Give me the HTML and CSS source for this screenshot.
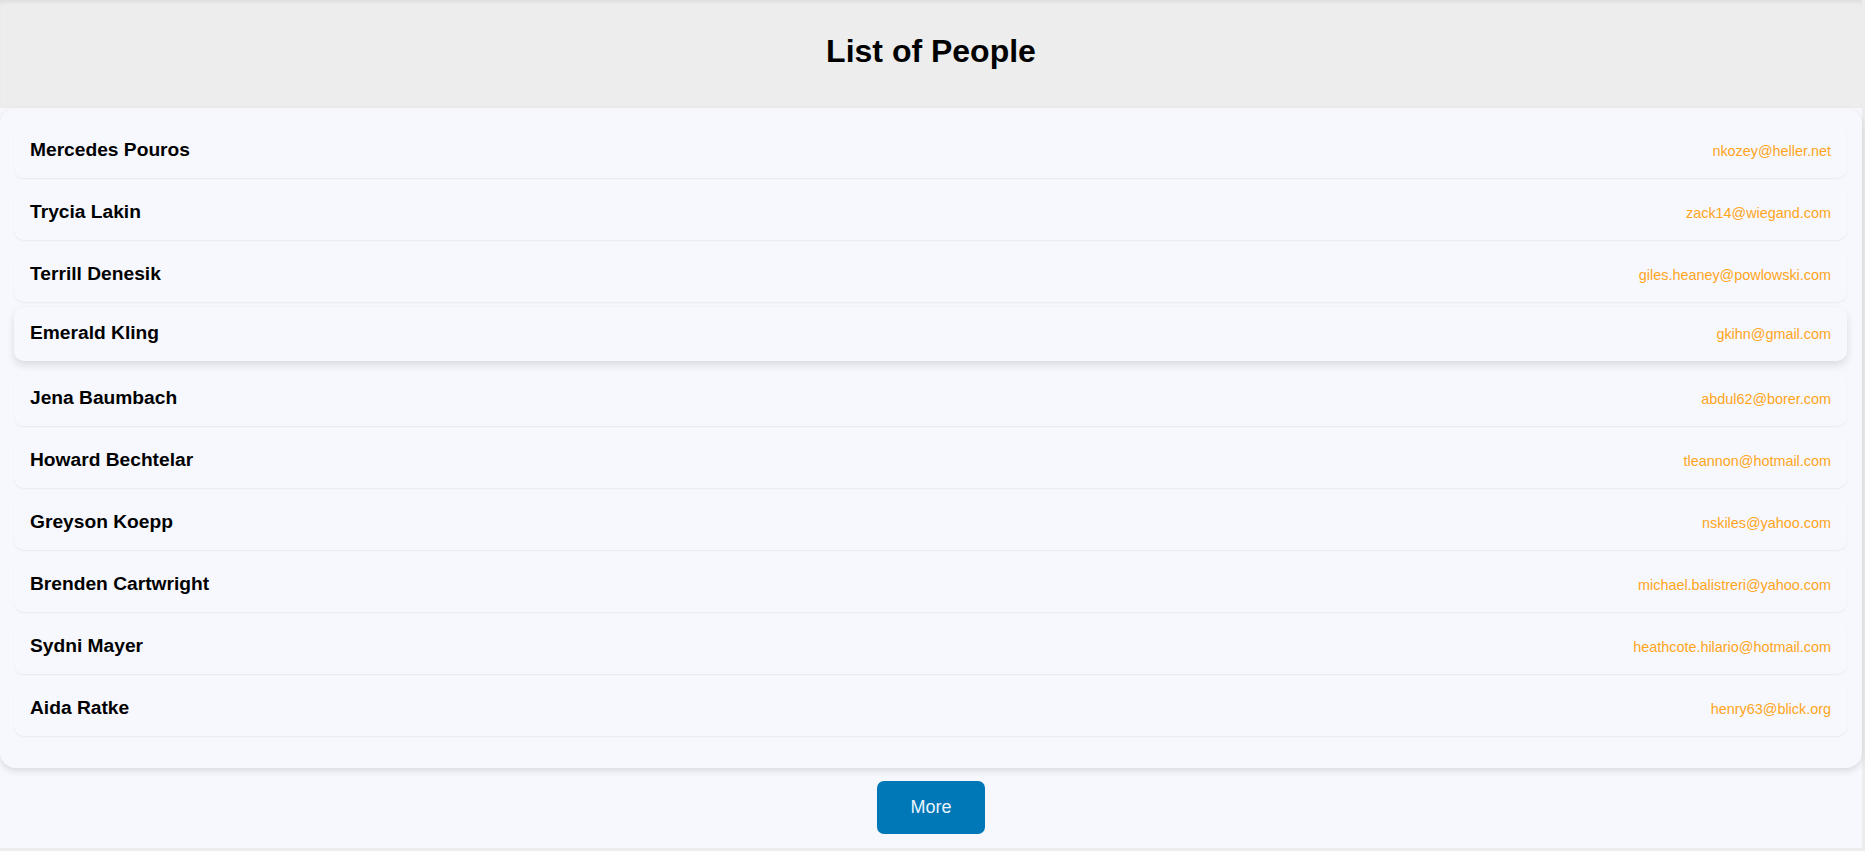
FILE: index.html
```html
<!DOCTYPE html>
<html lang="en">
<head>
<meta charset="utf-8">
<title>List of People</title>
<link rel="stylesheet" href="styles.css">
</head>
<body>
<div class="app">
  <header class="header">
    <h1 class="title">List of People</h1>
  </header>
  <main class="card">
    <ul class="people">
      <li class="person"><span class="name">Mercedes Pouros</span><span class="email">nkozey@heller.net</span></li>
      <li class="person"><span class="name">Trycia Lakin</span><span class="email">zack14@wiegand.com</span></li>
      <li class="person"><span class="name">Terrill Denesik</span><span class="email">giles.heaney@powlowski.com</span></li>
      <li class="person person-hover"><span class="name">Emerald Kling</span><span class="email">gkihn@gmail.com</span></li>
      <li class="person"><span class="name">Jena Baumbach</span><span class="email">abdul62@borer.com</span></li>
      <li class="person"><span class="name">Howard Bechtelar</span><span class="email">tleannon@hotmail.com</span></li>
      <li class="person"><span class="name">Greyson Koepp</span><span class="email">nskiles@yahoo.com</span></li>
      <li class="person"><span class="name">Brenden Cartwright</span><span class="email">michael.balistreri@yahoo.com</span></li>
      <li class="person"><span class="name">Sydni Mayer</span><span class="email">heathcote.hilario@hotmail.com</span></li>
      <li class="person"><span class="name">Aida Ratke</span><span class="email">henry63@blick.org</span></li>
    </ul>
  </main>
  <div class="actions">
    <button class="more" type="button">More</button>
  </div>
</div>
</body>
</html>
```

FILE: styles.css
```css
* {
  box-sizing: border-box;
}

html, body {
  margin: 0;
  padding: 0;
}

body {
  background: #ededed;
  padding: 0 3px 3px 0;
  font-family: "Liberation Sans", Arial, sans-serif;
  color: #000;
}

.app {
  background: #f7f7fe;
}

.header {
  background: #ededed;
  height: 108px;
  padding-top: 33px;
  box-shadow: inset 0 4px 4px -2px rgba(0, 0, 0, 0.07);
}

.title {
  margin: 0;
  text-align: center;
  font-size: 32px;
  line-height: 37px;
  font-weight: 700;
}

.card {
  background: #f7f7fe;
  border-radius: 16px;
  box-shadow: 0 3px 7px rgba(0, 0, 0, 0.12);
  padding: 16px 15px 32px 14px;
}

.people {
  list-style: none;
  margin: 0;
  padding: 0;
  display: flex;
  flex-direction: column;
  gap: 8px;
}

.person {
  height: 54px;
  display: flex;
  align-items: center;
  justify-content: space-between;
  padding: 0 16px;
  background: #f7f7fe;
  border-radius: 10px;
  box-shadow: 0 1px 2px rgba(0, 0, 0, 0.06);
}

.person-hover {
  transform: translateY(-3px);
  box-shadow: 0 4px 8px rgba(0, 0, 0, 0.12);
}

.name {
  font-size: 19.2px;
  font-weight: 700;
  padding-bottom: 3px;
}

.email {
  font-size: 14.4px;
  color: #ffa51a;
  padding-bottom: 1px;
}

.actions {
  display: flex;
  justify-content: center;
  padding: 13px 0 14px;
}

.more {
  font-family: "Liberation Sans", Arial, sans-serif;
  font-size: 18px;
  line-height: 21px;
  color: #eaf4ff;
  background: #0077b6;
  border: none;
  border-radius: 7px;
  padding: 16px 33px;
  cursor: pointer;
}
```
